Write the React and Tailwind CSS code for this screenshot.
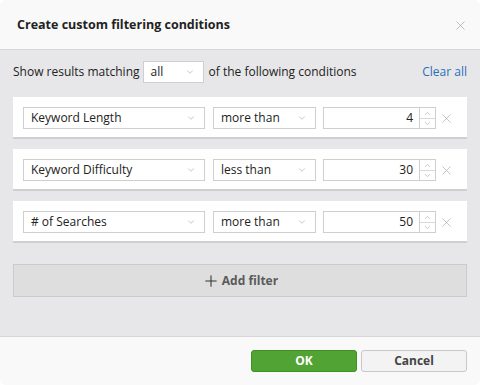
import { X, ChevronDown, ChevronUp, Plus } from 'lucide-react';

const rows = [
  { field: 'Keyword Length', op: 'more than', value: '4' },
  { field: 'Keyword Difficulty', op: 'less than', value: '30' },
  { field: '# of Searches', op: 'more than', value: '50' },
];

function Select({ label, className }) {
  return (
    <div className={`h-[22px] flex items-center justify-between bg-white border border-[#cfcfcf] pl-[7px] pr-[8px] text-[12px] text-[#222] ${className}`}>
      <span>{label}</span>
      <ChevronDown size={10} strokeWidth={1.4} className="text-[#a0a0a0]" />
    </div>
  );
}

export default function App() {
  return (
    <div className="w-[480px] h-[385px] bg-white" style={{ fontFamily: '"Open Sans", "DejaVu Sans", sans-serif' }}>
      <div className="w-full h-full rounded-[6px] overflow-hidden flex flex-col">
        <div className="h-[50px] shrink-0 bg-[#f9f9f9] border-b border-[#d6d6d8] flex items-center justify-between pl-[17px] pr-[12px] pt-[2px]">
          <span className="text-[12.5px] font-bold text-[#222]">Create custom filtering conditions</span>
          <X size={15} strokeWidth={1.2} className="text-[#aaa]" />
        </div>

        <div className="flex-1 bg-[#e7e7e9] px-[13px] pt-[11px]">
          <div className="h-[22px] flex items-center text-[12px] text-[#222]">
            <span>Show results matching</span>
            <Select label="all" className="w-[61px] ml-[3px] mr-[5px]" />
            <span>of the following conditions</span>
            <span className="ml-auto text-[#2a6ebb]">Clear all</span>
          </div>

          <div className="mt-[14px] flex flex-col gap-[10px]">
            {rows.map((r) => (
              <div key={r.field} className="h-[42px] bg-white border-b-2 border-[#cfcfd2] flex items-center pl-[10px] pr-[13px] pt-[2px]">
                <Select label={r.field} className="w-[182px]" />
                <Select label={r.op} className="w-[103px] ml-[8px]" />
                <div className="ml-[7px] h-[22px] w-[97px] bg-white border border-[#cfcfcf] flex items-center justify-end pr-[6px] text-[12px] text-[#222]">
                  {r.value}
                </div>
                <div className="h-[22px] w-[16px] border border-l-0 border-[#cfcfcf] flex flex-col items-center justify-center text-[#a0a0a0]">
                  <ChevronUp size={9} strokeWidth={1.5} />
                  <div className="w-full h-px bg-[#d8d8d8]" />
                  <ChevronDown size={9} strokeWidth={1.5} />
                </div>
                <X size={15} strokeWidth={1.1} className="ml-auto text-[#aaa]" />
              </div>
            ))}
          </div>

          <div className="mt-[21px] h-[33px] bg-[#dededf] border border-[#cacacc] flex items-center justify-center gap-[2px] text-[12px] font-bold text-[#5a5a5a]">
            <Plus size={18} strokeWidth={1.4} className="text-[#333]" />
            <span>Add filter</span>
          </div>
        </div>

        <div className="h-[49px] shrink-0 bg-[#f9f9f9] border-t border-[#d6d6d8] flex items-center justify-end gap-[4px] pr-[13px]">
          <div className="w-[106px] h-[22px] rounded-[3px] bg-[#51a333] border border-[#3f8f25] flex items-center justify-center text-[12px] font-bold text-white">OK</div>
          <div className="w-[106px] h-[22px] rounded-[3px] bg-[#f3f3f3] border border-[#c8c8c8] flex items-center justify-center text-[12px] font-bold text-[#444]">Cancel</div>
        </div>
      </div>
    </div>
  );
}
